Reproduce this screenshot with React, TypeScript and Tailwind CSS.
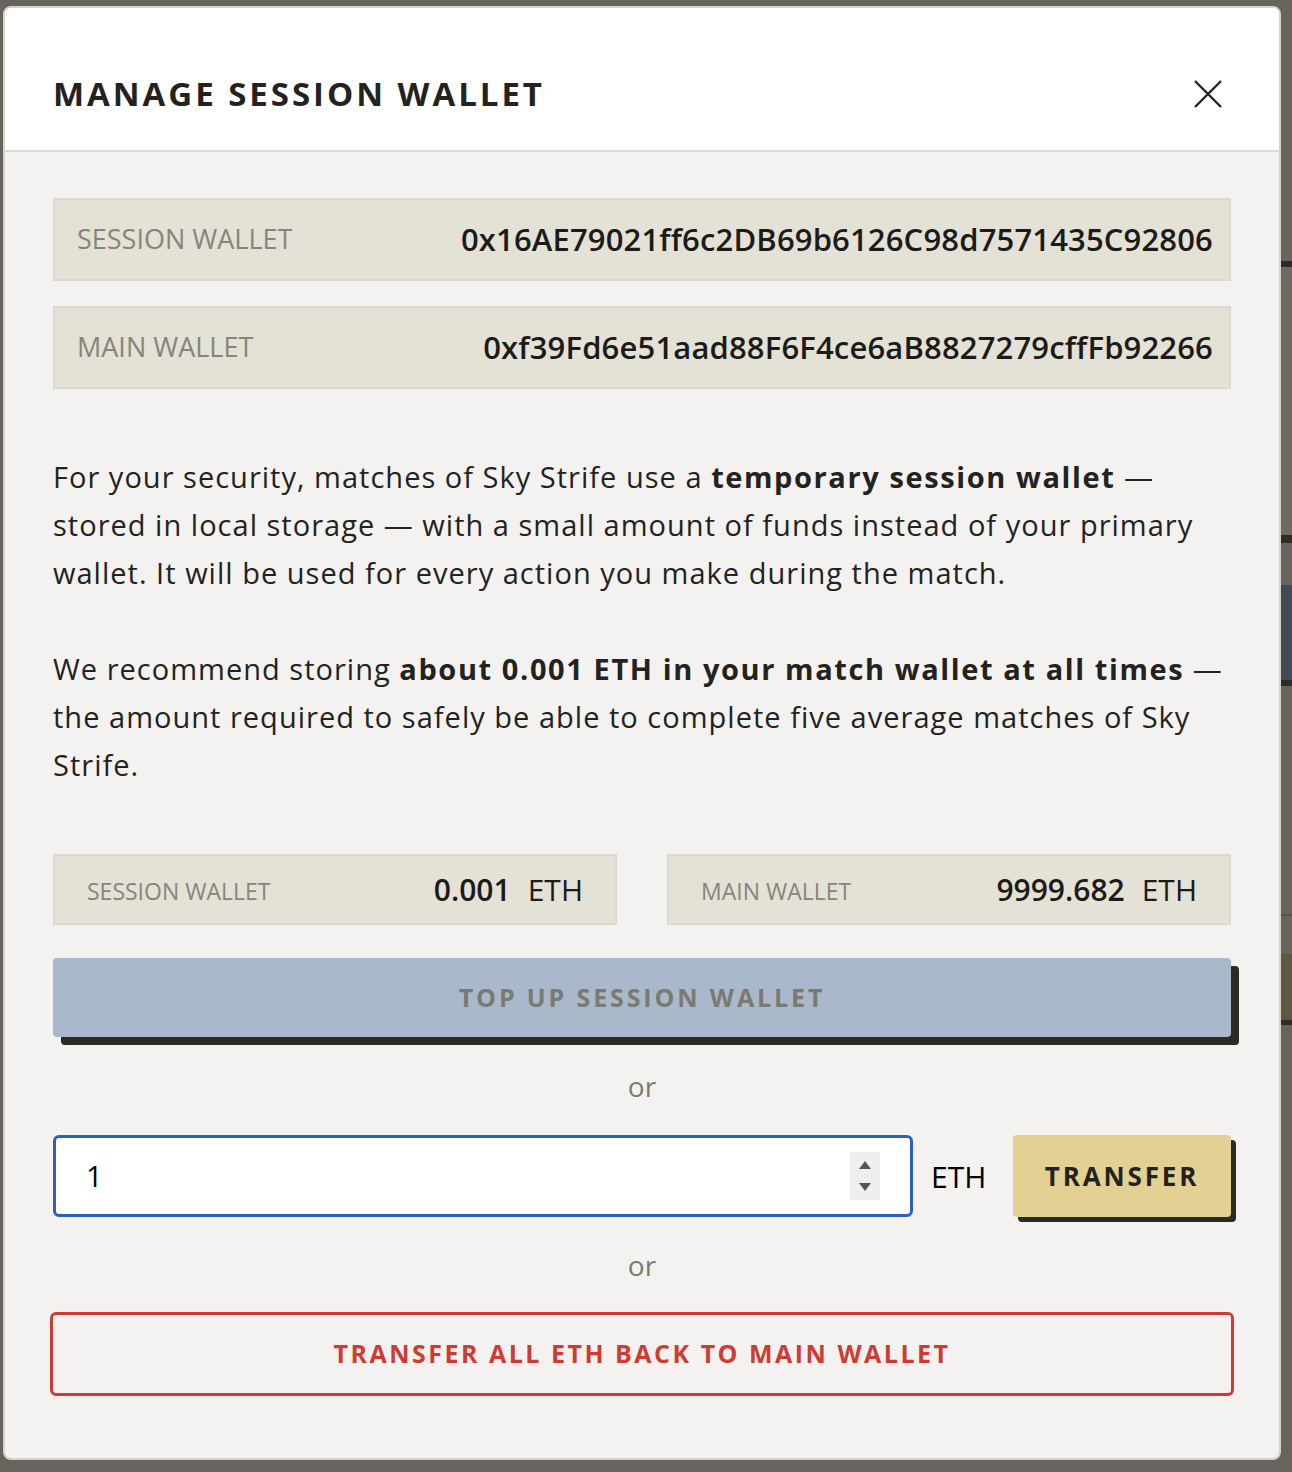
const Spinner = () => (
  <div className="flex flex-col items-center justify-center gap-[14px] w-[30px] h-[48px] bg-[#efefef]">
    <svg width="12" height="8" viewBox="0 0 12 8">
      <path d="M6 0 L12 8 L0 8 Z" fill="#555" />
    </svg>
    <svg width="12" height="8" viewBox="0 0 12 8">
      <path d="M0 0 L12 0 L6 8 Z" fill="#555" />
    </svg>
  </div>
);

const CloseIcon = () => (
  <svg width="28" height="28" viewBox="0 0 28 28" className="mr-[9px]">
    <path d="M1 1 L27 27 M27 1 L1 27" stroke="#23221e" strokeWidth="2.4" />
  </svg>
);

const AddressRow = ({ label, address }: { label: string; address: string }) => (
  <div className="flex items-center justify-between h-[83px] pl-[22px] pr-[16px] bg-[#e4e1d7] border-2 border-[#dcd9ce]">
    <span className="text-[27px] text-[#87857a] uppercase">{label}</span>
    <span className="text-[31px] font-semibold tracking-[0.005em] text-[#1c1b18]">{address}</span>
  </div>
);

const BalanceBox = ({ label, amount }: { label: string; amount: string }) => (
  <div className="flex items-center justify-between h-[71px] pl-[32px] pr-[32px] bg-[#e4e1d7] border-2 border-[#dcd9ce]">
    <span className="text-[23px] text-[#87857a] uppercase pt-[4px]">{label}</span>
    <span className="text-[30px] font-semibold text-[#1c1b18]">
      {amount}
      <span className="ml-[17px] font-medium">ETH</span>
    </span>
  </div>
);

export default function App() {
  return (
    <div className="min-h-[1472px] bg-[#67645d] flex pl-[3px] pt-[6px] font-['Open_Sans',sans-serif] text-[#23221e]">
      <div className="w-[1278px] h-[1454px] rounded-[8px] border-2 border-[#d6d3c9] bg-[#f3f2f0] overflow-hidden flex flex-col">
        <div className="flex items-center justify-between h-[144px] pt-[30px] px-[48px] bg-white border-b-2 border-[#dddbd3]">
          <h1 className="text-[33px] font-bold tracking-[0.09em] uppercase">Manage Session Wallet</h1>
          <CloseIcon />
        </div>

        <div className="flex flex-col px-[48px] pt-[46px]">
          <AddressRow label="Session Wallet" address="0x16AE79021ff6c2DB69b6126C98d7571435C92806" />
          <div className="mt-[25px]">
            <AddressRow label="Main Wallet" address="0xf39Fd6e51aad88F6F4ce6aB8827279cffFb92266" />
          </div>

          <p className="mt-[64px] text-[29px] leading-[48px] tracking-[0.035em]">
            For your security, matches of Sky Strife use a{' '}
            <strong className="font-bold tracking-[0.055em]">temporary session wallet</strong> — stored in local storage — with a small amount of funds instead of your primary wallet. It will be used for every action you make during the match.
          </p>
          <p className="mt-[48px] text-[29px] leading-[48px] tracking-[0.035em]">
            We recommend storing{' '}
            <strong className="font-bold tracking-[0.055em]">about 0.001 ETH in your match wallet at all times</strong> — the amount required to safely be able to complete five average matches of Sky Strife.
          </p>

          <div className="mt-[65px] grid grid-cols-2 gap-[50px]">
            <BalanceBox label="Session Wallet" amount="0.001" />
            <BalanceBox label="Main Wallet" amount="9999.682" />
          </div>

          <button
            type="button"
            className="mt-[33px] h-[79px] rounded-[4px] bg-[#a9b8cb] shadow-[8px_8px_0_#2b2a25] text-[25px] font-bold tracking-[0.115em] text-[#7a7a70] uppercase"
          >
            Top up session wallet
          </button>

          <div className="flex items-center justify-center h-[98px] text-[28px] text-[#7d7a72]">or</div>

          <div className="flex items-center h-[82px]">
            <div className="flex-1 h-full flex items-center justify-between pl-[30px] pr-[30px] bg-white border-[3px] border-[#2a5fc9] rounded-[6px]">
              <span className="text-[29px] font-medium text-black">1</span>
              <Spinner />
            </div>
            <span className="ml-[18px] w-[55px] text-[30px] font-medium text-black">ETH</span>
            <button
              type="button"
              className="ml-[27px] w-[218px] h-full rounded-[4px] bg-[#e3d193] shadow-[5px_5px_0_#2b2a25] text-[26px] font-bold tracking-[0.11em] text-[#23221e] uppercase"
            >
              Transfer
            </button>
          </div>

          <div className="flex items-center justify-center h-[95px] text-[28px] text-[#7d7a72]">or</div>

          <button
            type="button"
            className="-mx-[3px] h-[84px] rounded-[6px] border-[3px] border-[#cf3b30] text-[25px] font-bold tracking-[0.1em] text-[#cf3b30] uppercase"
          >
            Transfer all ETH back to main wallet
          </button>
        </div>
      </div>

      <div className="flex-1 flex flex-col">
        <div className="h-[255px]" />
        <div className="h-[6px] bg-[#2d2c28]" />
        <div className="h-[268px] bg-[#6d6a63]" />
        <div className="h-[8px] bg-[#2d2c28]" />
        <div className="h-[42px]" />
        <div className="h-[95px] bg-[#414b58]" />
        <div className="h-[6px] bg-[#2d2c28]" />
        <div className="h-[228px]" />
        <div className="h-[2px] bg-[#55534d]" />
        <div className="h-[38px]" />
        <div className="h-[66px] bg-[#5f5741]" />
        <div className="h-[5px] bg-[#2d2c28]" />
      </div>
    </div>
  );
}
